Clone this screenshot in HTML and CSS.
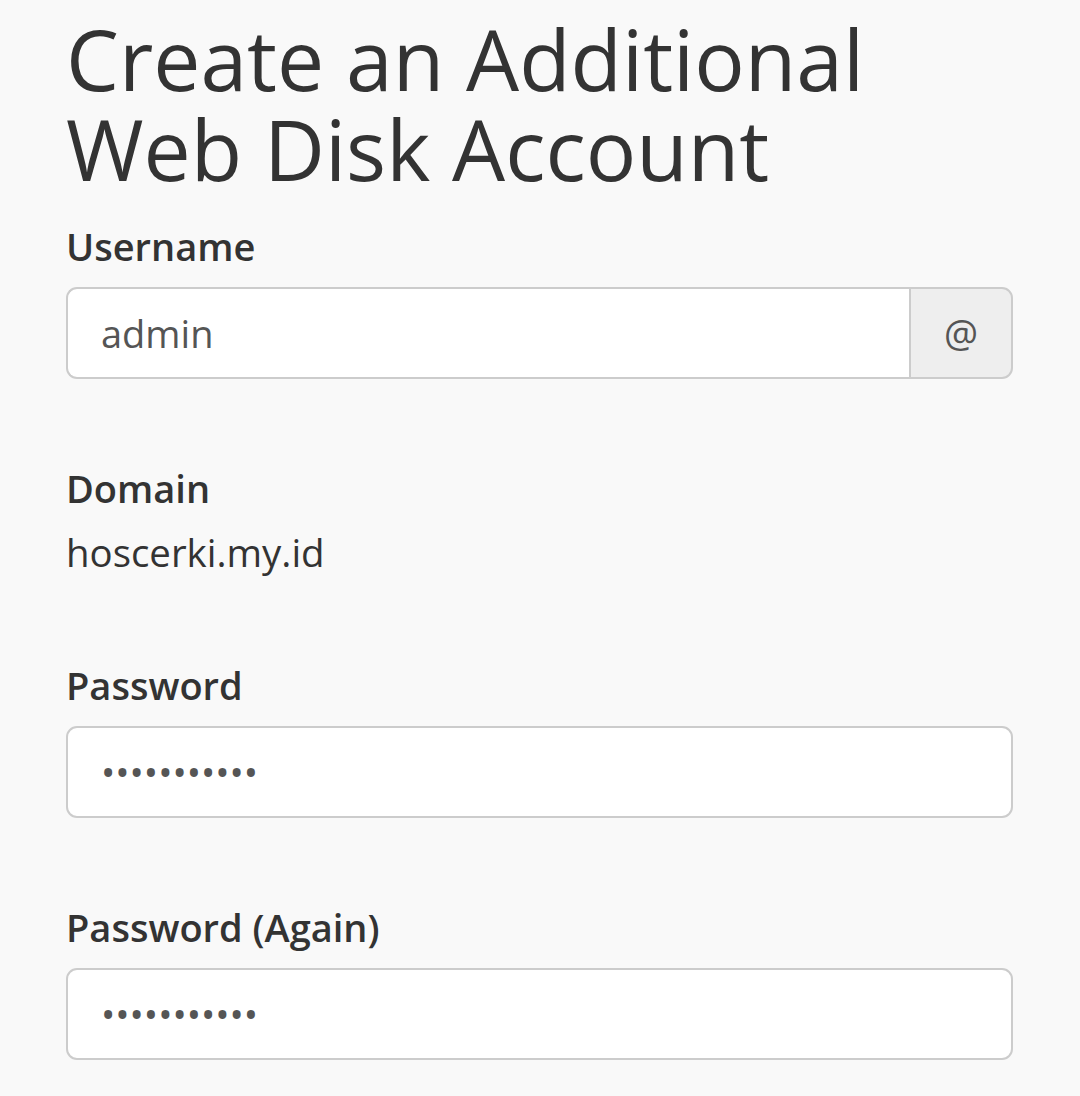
FILE: index.html
```html
<!DOCTYPE html>
<html lang="en">
<head>
<meta charset="utf-8">
<title>Create an Additional Web Disk Account</title>
<link rel="stylesheet" href="styles.css">
</head>
<body>
<main class="page">
  <h1 class="title">Create an Additional Web Disk Account</h1>
  <form class="form">
    <div class="group">
      <label class="label" for="user">Username</label>
      <div class="input-group">
        <input class="control control-grouped" id="user" type="text" value="admin">
        <span class="addon">@</span>
      </div>
    </div>
    <div class="group">
      <div class="label">Domain</div>
      <div class="value">hoscerki.my.id</div>
    </div>
    <div class="group">
      <label class="label" for="pw">Password</label>
      <input class="control" id="pw" type="password" value="abcdefghijk">
    </div>
    <div class="group">
      <label class="label" for="pw2">Password (Again)</label>
      <input class="control" id="pw2" type="password" value="abcdefghijk">
    </div>
  </form>
</main>
</body>
</html>
```
FILE: styles.css
```css
html, body {
  margin: 0;
  padding: 0;
  background: #f9f9f9;
}
body {
  font-family: "Open Sans", "Noto Sans", sans-serif;
  color: #333333;
  overflow: hidden;
}
.page {
  padding: 14px 67px 0 66px;
}
.title {
  margin: 0;
  font-size: 84px;
  line-height: 90px;
  font-weight: 400;
  color: #333333;
  max-width: 860px;
}
.form {
  display: flex;
  flex-direction: column;
  gap: 82px;
  margin-top: 25px;
}
.group {
  display: flex;
  flex-direction: column;
}
.label {
  display: block;
  font-size: 38px;
  line-height: 54px;
  font-weight: 600;
  color: #333333;
  margin-bottom: 14px;
}
.value {
  font-size: 38.4px;
  line-height: 54px;
  color: #333333;
  margin-top: -4px;
  margin-bottom: -3px;
}
.input-group {
  display: flex;
}
.control {
  box-sizing: border-box;
  width: 100%;
  height: 92px;
  margin: 0;
  padding: 0 33px;
  border: 2px solid #cccccc;
  border-radius: 11px;
  background: #ffffff;
  font-family: "Open Sans", "Noto Sans", sans-serif;
  font-size: 38px;
  color: #555555;
  outline: none;
}
.control-grouped {
  flex: 1;
  border-right: none;
  border-top-right-radius: 0;
  border-bottom-right-radius: 0;
}
.addon {
  box-sizing: border-box;
  width: 104px;
  height: 92px;
  display: flex;
  align-items: center;
  justify-content: center;
  border: 2px solid #cccccc;
  border-radius: 0 11px 11px 0;
  background: #eeeeee;
  font-size: 38px;
  color: #555555;
}
```
